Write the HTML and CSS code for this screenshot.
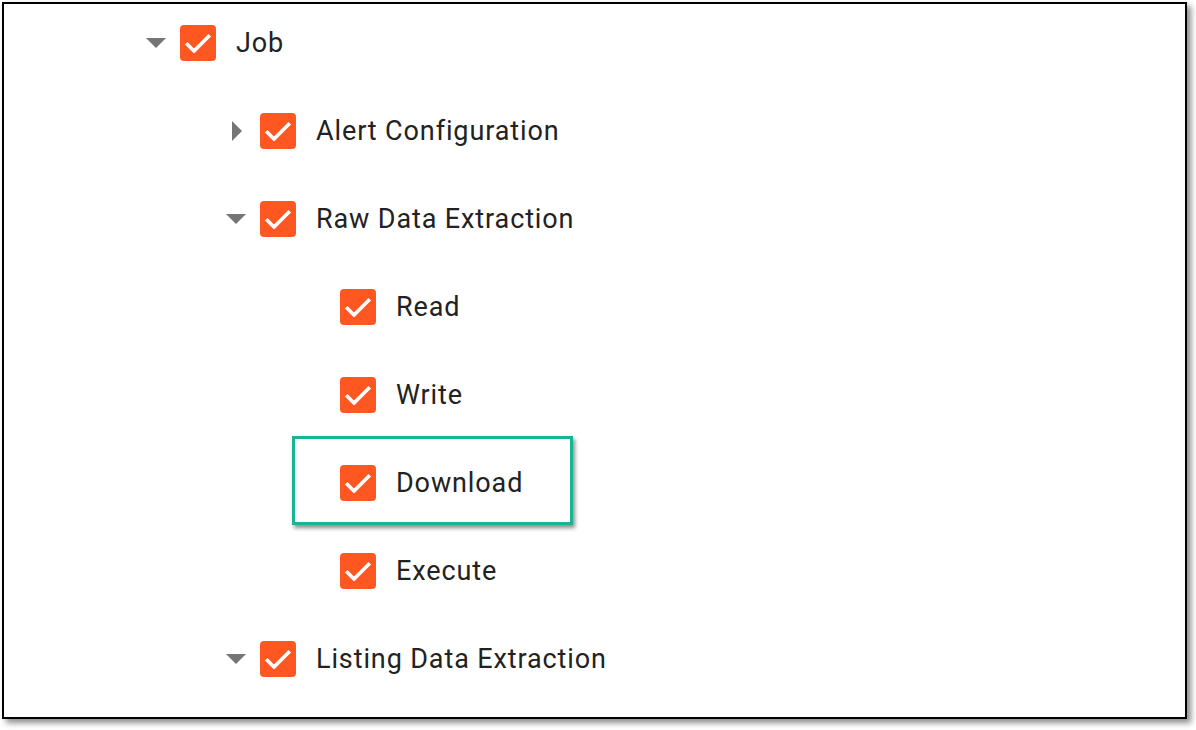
FILE: index.html
```html
<!DOCTYPE html>
<html>
<head>
<meta charset="utf-8">
<link rel="stylesheet" href="styles.css">
</head>
<body>
<div class="frame">
  <ul class="tree">
    <li class="row l0"><span class="arrow down"></span><span class="cb"><svg viewBox="0 0 36 36"><polyline points="7.5,19.5 14,26 28.5,11.5"/></svg></span><span class="label">Job</span></li>
    <li class="row l1"><span class="arrow right"></span><span class="cb"><svg viewBox="0 0 36 36"><polyline points="7.5,19.5 14,26 28.5,11.5"/></svg></span><span class="label">Alert Configuration</span></li>
    <li class="row l1"><span class="arrow down"></span><span class="cb"><svg viewBox="0 0 36 36"><polyline points="7.5,19.5 14,26 28.5,11.5"/></svg></span><span class="label">Raw Data Extraction</span></li>
    <li class="row l2"><span class="arrow"></span><span class="cb"><svg viewBox="0 0 36 36"><polyline points="7.5,19.5 14,26 28.5,11.5"/></svg></span><span class="label">Read</span></li>
    <li class="row l2"><span class="arrow"></span><span class="cb"><svg viewBox="0 0 36 36"><polyline points="7.5,19.5 14,26 28.5,11.5"/></svg></span><span class="label">Write</span></li>
    <li class="row l2 highlighted"><span class="arrow"></span><span class="cb"><svg viewBox="0 0 36 36"><polyline points="7.5,19.5 14,26 28.5,11.5"/></svg></span><span class="label">Download</span></li>
    <li class="row l2"><span class="arrow"></span><span class="cb"><svg viewBox="0 0 36 36"><polyline points="7.5,19.5 14,26 28.5,11.5"/></svg></span><span class="label">Execute</span></li>
    <li class="row l1"><span class="arrow down"></span><span class="cb"><svg viewBox="0 0 36 36"><polyline points="7.5,19.5 14,26 28.5,11.5"/></svg></span><span class="label">Listing Data Extraction</span></li>
  </ul>
</div>
</body>
</html>
```
FILE: styles.css
```css
html, body {
  margin: 0;
  padding: 0;
  background: #ffffff;
}
body {
  width: 1196px;
  height: 730px;
  overflow: hidden;
  font-family: Roboto, "Liberation Sans", sans-serif;
}
.frame {
  box-sizing: border-box;
  margin: 2px 0 0 2px;
  width: 1185px;
  height: 717px;
  border: 2px solid #000;
  background: #fff;
  box-shadow: 4px 4px 6px rgba(0, 0, 0, 0.45);
}
.tree {
  list-style: none;
  margin: 0;
  padding: 21px 0 0 142px;
  display: flex;
  flex-direction: column;
  gap: 52px;
}
.row {
  position: relative;
  display: flex;
  align-items: center;
  height: 36px;
}
.l1 { padding-left: 80px; }
.l2 { padding-left: 160px; }
.arrow {
  width: 20px;
  height: 20px;
  margin-right: 14px;
  position: relative;
  flex: none;
}
.arrow.down::before {
  content: "";
  position: absolute;
  left: 0;
  top: 5px;
  border-left: 10px solid transparent;
  border-right: 10px solid transparent;
  border-top: 10px solid #757575;
}
.arrow.right::before {
  content: "";
  position: absolute;
  left: 6px;
  top: 0;
  border-top: 10px solid transparent;
  border-bottom: 10px solid transparent;
  border-left: 10px solid #757575;
}
.cb {
  width: 36px;
  height: 36px;
  border-radius: 4px;
  background: #ff5722;
  flex: none;
  display: block;
}
.cb svg {
  display: block;
  width: 36px;
  height: 36px;
}
.cb polyline {
  fill: none;
  stroke: #fff;
  stroke-width: 3.6;
  stroke-linecap: square;
}
.label {
  margin-left: 20px;
  font-size: 27px;
  line-height: 36px;
  color: #222222;
  letter-spacing: 0.88px;
}
.highlighted::after {
  content: "";
  position: absolute;
  left: 146px;
  top: -29px;
  width: 281px;
  height: 89px;
  box-sizing: border-box;
  border: 3px solid #16b596;
  box-shadow: 2px 3px 4px rgba(0, 0, 0, 0.45);
}
```
